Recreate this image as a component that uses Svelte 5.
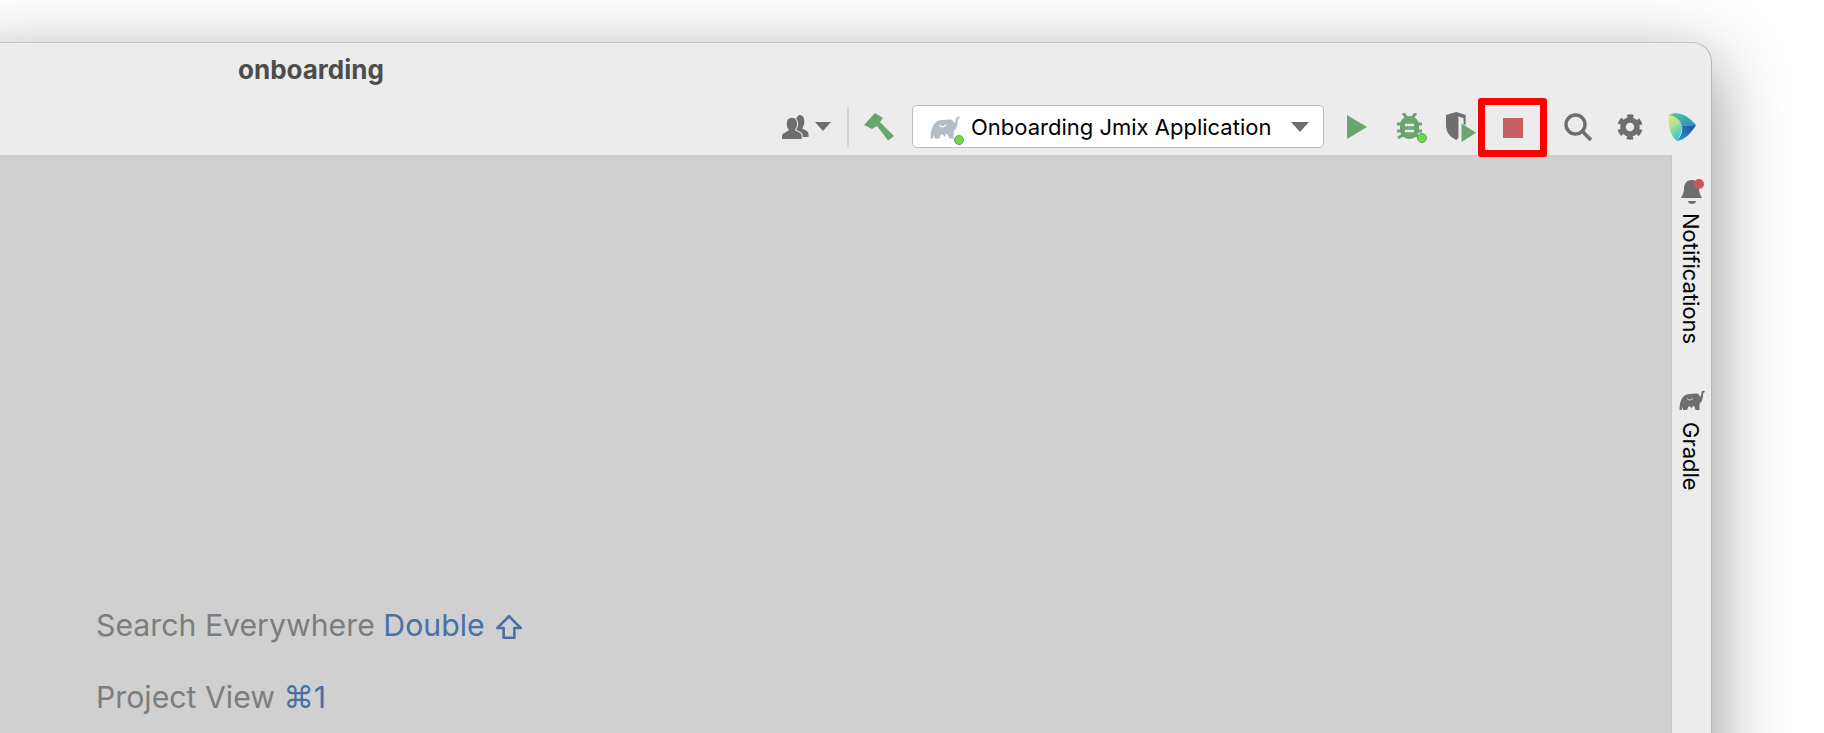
<script>
  const title = "onboarding";
  const elephant = "M.5 20C.5 10 4 4 11 4l6-.5c2-.5 3.500 1.500 4 3.500 1-1 1.500-3 1.500-4.500.3-2 3-2.300 3.500-.5l-1.200.8c-.5-.8-.5.2-.6 1.200-.2 4-1.200 8-3.700 9.500V20h-4l-1-3.500c-.5-.5-1.500-.5-2 0l-1 2c-.5-.5-1-2-1.500-2H9.500L8 20H4l-.5-3-1 3z";
</script>

<div class="page">
  <div class="window">
    <header class="titlebar">
      <div class="title">{title}</div>
      <div class="toolbar">
        <svg class="people" viewBox="0 0 26 25" aria-hidden="true">
          <path fill="#6e6e6e" d="M17 1c3 0 5 2 5 6 0 3-1 5-2 7 1 1 6 2 6 5v3h-7c-1-3-4-5-7-6 1-3 0-12 5-15z"/>
          <path fill="#6e6e6e" stroke="#ececec" d="M10 3c3.500 0 5.500 3 5.500 6.500 0 2.500-1 4.500-2 6 2 1 6.500 2 6.500 5.500v3.500H0V21c0-3 5-4.500 6.500-5.500-1-1.500-2-3.500-2-6C4.500 6 6.500 3 10 3z"/>
        </svg>
        <span class="caret small"></span>
        <span class="sep"></span>
        <svg class="hammer" viewBox="0 0 31 28" aria-hidden="true">
          <path fill="#6aa56f" d="M0 12 11 0l8 5-3 4 14 14-6 4.500L13 13l-5 3z"/>
        </svg>
        <div class="runconfig">
          <span class="elephant-wrap">
            <svg class="elephant" viewBox="0 0 26 20" aria-hidden="true">
              <path fill="#b4bcc6" d={elephant}/>
              <path d="M8 8.500c2 2 4 2 6-.5" fill="none" stroke="#fff" stroke-width="1"/>
            </svg>
            <span class="dot"></span>
          </span>
          <span class="config-name">Onboarding Jmix Application</span>
          <span class="caret"></span>
        </div>
        <svg class="play" viewBox="0 0 20 24" aria-hidden="true">
          <path fill="#6aa56f" d="M0 0l20 12L0 24z"/>
        </svg>
        <span class="bug-wrap">
          <svg class="bug" viewBox="0 0 25 27" aria-hidden="true">
            <g stroke="#6aa56f" stroke-width="3" fill="none">
              <path d="M6 0l4 5M19 0l-4 5M0 11h25M0 18h25M1 25l5-3M24 25l-5-3"/>
            </g>
            <rect x="3" y="3" width="19" height="23" rx="9" fill="#6aa56f"/>
            <path d="M8 12h9M8 18h9" stroke="#ececec" stroke-width="2.500"/>
          </svg>
          <span class="dot"></span>
        </span>
        <svg class="shield" viewBox="0 0 30 29" aria-hidden="true">
          <path fill="#6e6e6e" d="M1 3l10-3 9 3v9h-2V6l-5-2v21l-2 2c-6-3-10-7-10-14z"/>
          <path fill="#6aa56f" d="M16 11l14 9-14 9z"/>
        </svg>
        <div class="stop-frame"><span class="stop"></span></div>
        <svg class="search" viewBox="0 0 28 28" aria-hidden="true">
          <circle cx="11.500" cy="11.500" r="9.500" fill="none" stroke="#6e6e6e" stroke-width="3.400"/>
          <path d="M18.500 18.500 27 27" stroke="#6e6e6e" stroke-width="3.600"/>
        </svg>
        <svg class="gear" viewBox="0 0 26 26" aria-hidden="true">
          <circle cx="13" cy="13" r="7" fill="none" stroke="#6e6e6e" stroke-width="5.500"/>
          <circle cx="13" cy="13" r="10.750" fill="none" stroke="#6e6e6e" stroke-width="3.800" stroke-dasharray="6.200 5.057" stroke-dashoffset="-2.530"/>
        </svg>
        <svg class="logo" viewBox="0 0 28 29" aria-hidden="true">
          <defs>
            <linearGradient id="leaf" x1="0" y1="0" x2="0.4" y2="1">
              <stop offset="0" stop-color="#e8ec5a"/>
              <stop offset="0.5" stop-color="#a5e09a"/>
              <stop offset="1" stop-color="#38c4d2"/>
            </linearGradient>
            <linearGradient id="top" x1="0" y1="0" x2="1" y2="1">
              <stop offset="0" stop-color="#5fc49a"/>
              <stop offset="1" stop-color="#1f8fb8"/>
            </linearGradient>
            <linearGradient id="low" x1="1" y1="0" x2="0" y2="1">
              <stop offset="0" stop-color="#24499f"/>
              <stop offset="1" stop-color="#2d9bdc"/>
            </linearGradient>
          </defs>
          <path fill="url(#leaf)" d="M1 3C0 13 2 24 9 29c3-5 5-10 5-15C13 9 8 4 1 3z"/>
          <path fill="url(#top)" d="M1 3c7-4 17-2 27 10l-14 1C13 9 8 4 1 3z"/>
          <path fill="url(#low)" d="M14 14l14-1c-5 8-11 15-19 16 4-5 6-10 5-15z"/>
        </svg>
      </div>
    </header>
    <div class="body">
      <main class="empty">
        <p>Search Everywhere <span class="key">Double</span>
          <svg class="shift" viewBox="0 0 26 24" aria-label="Shift">
            <path d="M13 2 2 13h6v9h10v-9h6z" fill="none" stroke="#4a70a6" stroke-width="2.400" stroke-linejoin="round"/>
          </svg>
        </p>
        <p>Project View <span class="key"><span class="sym">⌘</span>1</span></p>
      </main>
      <aside class="strip">
        <div class="strip-item first">
          <svg class="bell" viewBox="0 0 24 26" aria-hidden="true">
            <path fill="#6e6e6e" d="M12 1c-6 0-8 4-8 9 0 4-2 7-3 9h21c-1-2-3-5-3-9 0-5-2-9-7-9z"/>
            <path fill="#6e6e6e" d="M8 22h8c0 2-2 3-4 3s-4-1-4-3z"/>
            <circle cx="19" cy="5" r="5" fill="#c9565c"/>
          </svg>
          <span class="vtext">Notifications</span>
        </div>
        <div class="strip-item second">
          <svg class="gradle" viewBox="0 0 26 20" aria-hidden="true">
            <path fill="#6e6e6e" d={elephant}/>
            <path d="M8 8.500c2 2 4 2 6-.5" fill="none" stroke="#ececec" stroke-width="1"/>
          </svg>
          <span class="vtext">Gradle</span>
        </div>
      </aside>
    </div>
  </div>
</div>

<style>
  :global(html), :global(body) {
    margin: 0;
    height: 733px;
    overflow: hidden;
    background: #fff;
  }
  .page {
    height: 733px;
    overflow: hidden;
    padding-top: 42px;
    box-sizing: border-box;
    font-family: Inter, "Liberation Sans", sans-serif;
  }
  .window {
    margin-left: -30px;
    width: 1742px;
    height: 800px;
    box-sizing: border-box;
    display: flex;
    flex-direction: column;
    border-top: 1px solid #c2c2c2;
    border-right: 1px solid #b8b8b8;
    border-top-right-radius: 20px;
    background: #ececec;
    box-shadow: 0 22px 70px 4px rgba(0, 0, 0, 0.4);
  }
  .titlebar {
    height: 112px;
    flex: none;
    display: flex;
    flex-direction: column;
  }
  .title {
    height: 55px;
    padding-left: 268px;
    line-height: 54px;
    font-size: 26px;
    font-weight: 700;
    color: #4d4d4d;
  }
  .toolbar {
    height: 57px;
    display: flex;
    align-items: center;
    padding-right: 15px;
  }
  .people { width: 28px; height: 26px; margin-left: auto; }
  .caret {
    width: 0;
    height: 0;
    border-left: 9px solid transparent;
    border-right: 9px solid transparent;
    border-top: 10px solid #6e6e6e;
  }
  .caret.small {
    margin-left: 6px;
    border-left-width: 8px;
    border-right-width: 8px;
    border-top-width: 9px;
  }
  .sep {
    width: 2px;
    height: 40px;
    margin-left: 16px;
    background: #d2d2d2;
  }
  .hammer { width: 31px; height: 28px; margin-left: 15px; }
  .runconfig {
    width: 412px;
    height: 43px;
    box-sizing: border-box;
    margin-left: 17px;
    display: flex;
    align-items: center;
    padding: 0 14px 0 17px;
    background: #fff;
    border: 1px solid #bdbdbd;
    border-radius: 5px;
  }
  .elephant-wrap, .bug-wrap { position: relative; display: flex; flex: none; }
  .elephant { width: 30px; height: 24px; }
  .elephant-wrap .dot { right: -4px; bottom: -6px; }
  .dot {
    position: absolute;
    width: 8px;
    height: 8px;
    border-radius: 50%;
    background: #62e03c;
    border: 1px solid #7d8f7a;
  }
  .config-name {
    margin-left: 11px;
    flex: 1;
    font-size: 22px;
    color: #000;
    white-space: nowrap;
  }
  .play { width: 20px; height: 24px; margin-left: 23px; }
  .bug-wrap { margin-left: 30px; }
  .bug { width: 25px; height: 27px; }
  .bug-wrap .dot { right: -5px; bottom: -3px; }
  .shield { width: 31px; height: 30px; margin-left: 23px; }
  .stop-frame {
    width: 69px;
    height: 59px;
    box-sizing: border-box;
    margin-left: 2px;
    margin-top: 2px;
    border: 7px solid #ff0000;
    border-radius: 3px;
    display: flex;
    align-items: center;
    justify-content: center;
    position: relative;
    z-index: 1;
  }
  .stop { width: 20px; height: 20px; background: #c75f63; }
  .search { width: 28px; height: 28px; margin-left: 17px; }
  .gear { width: 26px; height: 26px; margin-left: 25px; }
  .logo { width: 28px; height: 29px; margin-left: 25px; }
  .body {
    flex: 1;
    display: flex;
    background: #d0d0d0;
  }
  .empty {
    flex: 1;
    padding: 434px 0 0 126px;
  }
  .empty p {
    margin: 0;
    line-height: 72px;
    font-size: 30.250px;
    color: #7d7d7d;
    white-space: nowrap;
  }
  .key { color: #4a70a6; }
  .sym { font-family: "DejaVu Sans", sans-serif; }
  .shift { width: 28px; height: 26px; vertical-align: -4px; margin-left: 2px; }
  .strip {
    width: 40px;
    flex: none;
    box-sizing: border-box;
    background: #ececec;
    border-left: 1px solid #c6c6c6;
    display: flex;
    flex-direction: column;
    align-items: center;
  }
  .strip-item {
    display: flex;
    flex-direction: column;
    align-items: center;
  }
  .strip-item.first { margin-top: 24px; }
  .strip-item.second { margin-top: 46px; }
  .bell { width: 24px; height: 26px; }
  .gradle { width: 26px; height: 20px; }
  .vtext {
    writing-mode: vertical-rl;
    font-size: 22px;
    line-height: 22px;
    color: #000;
    margin-top: 8px;
    transform: translateX(-1px);
  }
  .second .vtext { margin-top: 12px; }
</style>
